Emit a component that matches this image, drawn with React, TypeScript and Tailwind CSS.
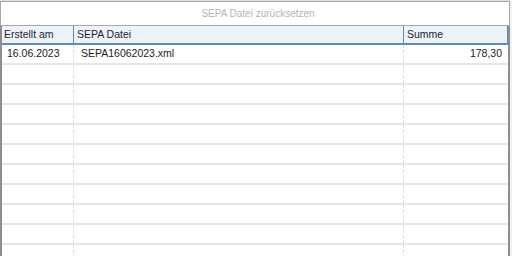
import React from "react";

const rows = [
  { date: "16.06.2023", file: "SEPA16062023.xml", sum: "178,30" },
  null, null, null, null, null, null, null, null, null, null,
];

export default function App() {
  return (
    <div
      className="w-[512px] h-[256px] bg-[#f2f2f2] overflow-hidden flex flex-col"
      style={{ fontFamily: '"Liberation Sans", Arial, sans-serif' }}
    >
      <div className="h-[1px] w-[510px] bg-[#e4ddd4] shrink-0" />
      <div className="w-[510px] h-[25px] shrink-0 bg-white border border-[#a9a9a9] flex items-center justify-center pl-[6px] text-[10px] text-[#b5b5b5]">
        SEPA Datei zurücksetzen
      </div>
      <div className="w-[510px] flex-1 bg-white border-l-2 border-r-2 border-[#8e8e8e] flex flex-col overflow-hidden">
        <div className="h-[19px] shrink-0 flex bg-[#eef3f9] border-b-2 border-[#5b8cc6] text-[10.5px] text-[#1f2333]">
          <div className="w-[72px] shrink-0 border-r border-[#5b8cc6] pl-[2px] flex items-center">Erstellt am</div>
          <div className="w-[330px] shrink-0 border-r border-[#5b8cc6] pl-[3px] flex items-center">SEPA Datei</div>
          <div className="flex-1 border-r border-[#5b8cc6] pl-[3px] flex items-center">Summe</div>
        </div>
        {rows.map((r, i) => (
          <div key={i} className="h-[20px] shrink-0 flex border-b-2 border-[#e6e6e6] text-[10.5px] text-[#222222]">
            <div className="w-[72px] shrink-0 border-r border-dashed border-[#dcdcdc] pl-[5px] flex items-center">{r ? r.date : ""}</div>
            <div className="w-[330px] shrink-0 border-r border-dashed border-[#dcdcdc] pl-[7px] flex items-center">{r ? r.file : ""}</div>
            <div className="flex-1 pr-[6px] flex items-center justify-end">{r ? r.sum : ""}</div>
          </div>
        ))}
      </div>
    </div>
  );
}
